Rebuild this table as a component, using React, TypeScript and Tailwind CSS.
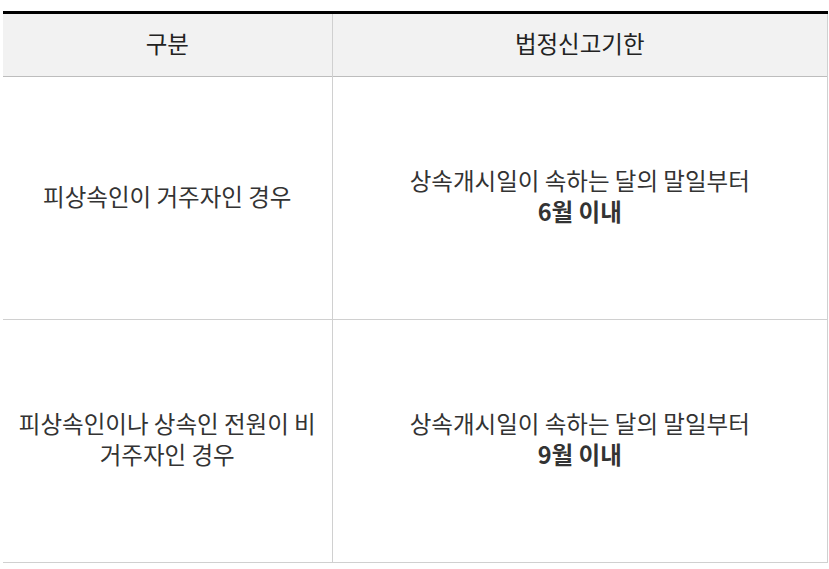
export default function App() {
  const rows = [
    { label: ['피상속인이 거주자인 경우'], limit: '6월 이내' },
    { label: ['피상속인이나 상속인 전원이 비', '거주자인 경우'], limit: '9월 이내' },
  ]

  return (
    <div
      className="bg-white pt-[11px] pl-[3px] w-[829px] h-[569px]"
      style={{ fontFamily: '"Noto Sans CJK KR", "Noto Sans", sans-serif' }}
    >
      <table className="w-[825px] border-collapse table-fixed text-[#333] text-[23.5px] leading-[31px]">
        <colgroup>
          <col className="w-[329px]" />
          <col />
        </colgroup>
        <thead>
          <tr className="bg-[#f2f2f2] border-t-[3px] border-t-black border-b border-b-[#bdbdbd]">
            <th className="h-[64px] font-normal text-[#222] text-center p-0 pb-[3px]">구분</th>
            <th className="h-[64px] font-normal text-[#222] text-center p-0 pb-[3px] border-l border-l-[#d0d0d0] border-r border-r-[#d0d0d0]">
              법정신고기한
            </th>
          </tr>
        </thead>
        <tbody>
          {rows.map((r, i) => (
            <tr key={i} className="border-b border-b-[#d0d0d0]">
              <td className="h-[243px] text-center align-middle p-0 pb-[4px]">
                {r.label.map((l, j) => (
                  <div key={j}>{l}</div>
                ))}
              </td>
              <td className="h-[243px] text-center align-middle p-0 pb-[4px] border-l border-l-[#d0d0d0] border-r border-r-[#d0d0d0]">
                <div>상속개시일이 속하는 달의 말일부터</div>
                <div className="font-bold">{r.limit}</div>
              </td>
            </tr>
          ))}
        </tbody>
      </table>
    </div>
  )
}
